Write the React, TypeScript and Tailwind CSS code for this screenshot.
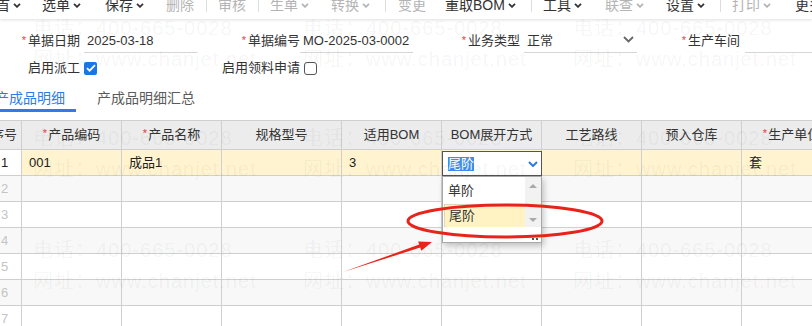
import React from "react";

const F = "font-['Liberation_Sans','Noto_Sans_CJK_SC',sans-serif]";

type TB = { t?: string; c?: boolean; d?: boolean; sep?: boolean; m: string };

const toolbar: TB[] = [
  { t: "首", c: true, m: "-ml-[4px]" },
  { t: "选单", c: true, m: "ml-[21px]" },
  { t: "保存", c: true, m: "ml-[24px]" },
  { t: "删除", d: true, m: "ml-[22px]" },
  { sep: true, m: "ml-[12px]" },
  { t: "审核", d: true, m: "ml-[11px]" },
  { sep: true, m: "ml-[12px]" },
  { t: "生单", c: true, d: true, m: "ml-[11px]" },
  { t: "转换", c: true, d: true, m: "ml-[22px]" },
  { sep: true, m: "ml-[15px]" },
  { t: "变更", d: true, m: "ml-[12px]" },
  { t: "重取BOM", c: true, m: "ml-[19px]" },
  { sep: true, m: "ml-[15px]" },
  { t: "工具", c: true, m: "ml-[11px]" },
  { t: "联查", c: true, d: true, m: "ml-[23px]" },
  { t: "设置", c: true, m: "ml-[22px]" },
  { sep: true, m: "ml-[15px]" },
  { t: "打印", c: true, d: true, m: "ml-[11px]" },
  { t: "更多", m: "ml-[24px]" },
];

function Chev({ cls }: { cls?: string }) {
  return (
    <svg width="8" height="5" viewBox="0 0 8 5" className={cls}>
      <path d="M1 0.8l3 3 3-3" fill="none" stroke="currentColor" strokeWidth="1.8" />
    </svg>
  );
}

function Field({ label, req, value, select, gap = "ml-[4px]" }: { label: string; req?: boolean; value?: string; select?: boolean; gap?: string }) {
  return (
    <div className="w-[220px] flex-none flex items-center h-full">
      <div className="w-[78px] flex-none flex justify-end items-center whitespace-nowrap">
        {req && <span className="text-[#e8413b] text-[11px] mr-[2px] mb-[2px]">*</span>}
        <span>{label}</span>
      </div>
      <div className={`${gap} w-[113px] flex-none h-full border-b border-[#d6d6d6] flex items-center justify-between pl-[3px] pr-[3px]`}>
        <span className="whitespace-nowrap">{value}</span>
        {select && (
          <svg width="11" height="7" viewBox="0 0 11 7" className="text-[#666] mb-[2px]">
            <path d="M1 1l4.5 4.5L10 1" fill="none" stroke="currentColor" strokeWidth="1.8" />
          </svg>
        )}
      </div>
    </div>
  );
}

const cols = [
  { w: "w-[35px]", label: "序号" },
  { w: "w-[100px]", label: "产品编码", req: true },
  { w: "w-[100px]", label: "产品名称", req: true },
  { w: "w-[120px]", label: "规格型号" },
  { w: "w-[100px]", label: "适用BOM" },
  { w: "w-[100px]", label: "BOM展开方式" },
  { w: "w-[100px]", label: "工艺路线" },
  { w: "w-[100px]", label: "预入仓库" },
  { w: "w-[100px]", label: "生产单位", req: true },
];

function Editor() {
  return (
    <>
      <div className="absolute left-0 top-[1px] w-[100px] h-[25px] border border-[#555] bg-white flex items-center justify-between pl-[5px] pr-[3px] z-10">
        <span className="bg-[#3d8ee8] text-white leading-[14px]">尾阶</span>
        <svg width="10" height="6" viewBox="0 0 10 6" className="text-[#2c7be5]">
          <path d="M1 1l4 4 4-4" fill="none" stroke="currentColor" strokeWidth="2" />
        </svg>
      </div>
      <div className="absolute left-0 top-[26px] w-[100px] h-[67px] border border-[#a8a8a8] bg-white z-10 shadow-[2px_3px_6px_rgba(0,0,0,0.22)] flex flex-col">
        <div className="flex h-[50px]">
          <div className="flex-1 flex flex-col">
            <div className="h-[27px] flex items-center pl-[5px] text-[#333]">单阶</div>
            <div className="h-[23px] ml-[1px] flex items-center pl-[4px] bg-[#fff3c4] border-t border-l border-[#dcd6bc] text-[#333]">尾阶</div>
          </div>
          <div className="w-[16px] flex-none bg-[#f2f2f2] flex flex-col items-center justify-between pt-[7px] pb-[5px]">
            <svg width="8" height="4" viewBox="0 0 8 4"><path d="M0 4L4 0L8 4Z" fill="#a9a9a9" /></svg>
            <svg width="8" height="4" viewBox="0 0 8 4"><path d="M0 0L4 4L8 0Z" fill="#a9a9a9" /></svg>
          </div>
        </div>
        <div className="flex-1 flex justify-end items-end pr-[3px] pb-[2px] gap-[2px]">
          <div className="w-[2px] h-[2px] bg-[#555]" />
          <div className="w-[2px] h-[2px] bg-[#555]" />
        </div>
      </div>
    </>
  );
}

const row1 = ["1", "001", "成品1", "", "3", "EDIT", "", "", "套"];

function Watermark({ x, y }: { x: string; y: string }) {
  return (
    <div className={`absolute ${x} ${y} flex flex-col gap-[11px] text-[20px] leading-[20px] tracking-[1px] text-[rgba(0,0,0,0.05)] whitespace-nowrap`}>
      <span>电话：400-665-0028</span>
      <span>网址：www.chanjet.net</span>
    </div>
  );
}

export default function App() {
  return (
    <div className={`${F} relative w-[812px] h-[326px] overflow-hidden bg-white flex flex-col`}>
      {/* toolbar */}
      <div className="relative z-40 h-[19px] flex-none bg-white shadow-[0_1px_3px_rgba(0,0,0,0.13)] overflow-hidden">
        <div className="flex items-center h-[20px] -mt-[5px] text-[14px] leading-[20px] whitespace-nowrap">
          {toolbar.map((it, i) =>
            it.sep ? (
              <div key={i} className={`${it.m} flex-none w-px h-[14px] bg-[#dddddd]`} />
            ) : (
              <div key={i} className={`${it.m} flex-none flex items-center ${it.d ? "text-[#b4b4b4]" : "text-[#333]"}`}>
                <span>{it.t}</span>
                {it.c && <Chev cls="ml-[3px]" />}
              </div>
            )
          )}
        </div>
      </div>

      {/* form */}
      <div className="mt-[10px] flex flex-col gap-[3px] text-[13px] text-[#333]">
        <div className="flex h-[24px] ml-[2px]">
          <Field label="单据日期" req value="2025-03-18" />
          <Field label="单据编号" req value="MO-2025-03-0002" gap="ml-[0px]" />
          <Field label="业务类型" req value="正常" select />
          <Field label="生产车间" req gap="ml-[5px]" />
        </div>
        <div className="flex h-[24px] ml-[2px]">
          <div className="w-[220px] flex-none flex items-center">
            <div className="w-[78px] text-right">启用派工</div>
            <div className="ml-[4px] w-[13px] h-[13px] rounded-[2px] bg-[#1a75e6] flex items-center justify-center">
              <svg width="10" height="8" viewBox="0 0 10 8">
                <path d="M1 4.2l2.6 2.5L9 1.2" fill="none" stroke="white" strokeWidth="1.8" />
              </svg>
            </div>
          </div>
          <div className="w-[220px] flex-none flex items-center">
            <div className="w-[78px] text-right whitespace-nowrap">启用领料申请</div>
            <div className="ml-[4px] w-[13px] h-[13px] rounded-[3px] border border-[#555] bg-white" />
          </div>
        </div>
      </div>

      {/* tabs */}
      <div className="mt-[4px] flex h-[29px] text-[14px] whitespace-nowrap">
        <div className="-ml-[16px] px-[11px] h-full border-b-[3px] border-[#2e7ce4] text-[#2e7ce4] flex items-center pt-[4px]">产成品明细</div>
        <div className="ml-[10px] px-[11px] h-full text-[#5a5a5a] flex items-center pb-[3px] pt-[4px]">产成品明细汇总</div>
      </div>

      {/* table */}
      <div className="mt-[8px] -ml-[13px] border-t border-[#cfcfcf] text-[13px] text-[#222]">
        <div className="flex h-[29px] border-b border-[#cfcfcf] bg-[#ececec] text-[#333]">
          {cols.map((c, i) => (
            <div key={i} className={`${c.w} flex-none h-full border-r border-[#cfcfcf] flex items-center justify-center whitespace-nowrap`}>
              {c.req && <span className="text-[#e8413b] text-[11px] mr-[1px] mb-[4px]">*</span>}
              {c.label}
            </div>
          ))}
        </div>
        <div className="flex h-[26px] border-b border-[#cfcfcf] bg-[#fff4cf]">
          {cols.map((c, i) => (
            <div
              key={i}
              className={`${c.w} flex-none h-full border-r border-[#cfcfcf] flex items-center whitespace-nowrap relative ${i === 0 ? "pl-[14px] bg-white" : "pl-[7px]"}`}
            >
              {row1[i] === "EDIT" ? <Editor /> : row1[i]}
            </div>
          ))}
        </div>
        {[2, 3, 4, 5, 6, 7].map((n) => (
          <div key={n} className={`flex h-[26px] border-b border-[#cfcfcf] ${n % 2 === 0 ? "bg-[#f8f8f8]" : "bg-white"}`}>
            {cols.map((c, i) => (
              <div key={i} className={`${c.w} flex-none h-full border-r border-[#cfcfcf] flex items-center text-[#c4c4c4] ${i === 0 ? "pl-[14px]" : ""}`}>
                {i === 0 ? n : ""}
              </div>
            ))}
          </div>
        ))}
      </div>

      {/* watermark */}
      <div className="absolute inset-0 z-30 pointer-events-none">
        <Watermark x="left-[33px]" y="top-[18px]" />
        <Watermark x="left-[303px]" y="top-[18px]" />
        <Watermark x="left-[573px]" y="top-[18px]" />
        <Watermark x="left-[33px]" y="top-[128px]" />
        <Watermark x="left-[303px]" y="top-[128px]" />
        <Watermark x="left-[573px]" y="top-[128px]" />
        <Watermark x="left-[33px]" y="top-[240px]" />
        <Watermark x="left-[303px]" y="top-[240px]" />
        <Watermark x="left-[573px]" y="top-[240px]" />
      </div>

      {/* annotations */}
      <svg className="absolute left-0 top-0 z-50 pointer-events-none" width="812" height="326" viewBox="0 0 812 326">
        <ellipse cx="505" cy="221" rx="97" ry="16" fill="none" stroke="#e8231a" strokeWidth="3" />
        <polygon points="343,272 420.2,247.6 421.3,250.8 432,242 418.1,241.4 419.2,244.6" fill="#e8231a" />
      </svg>
    </div>
  );
}
